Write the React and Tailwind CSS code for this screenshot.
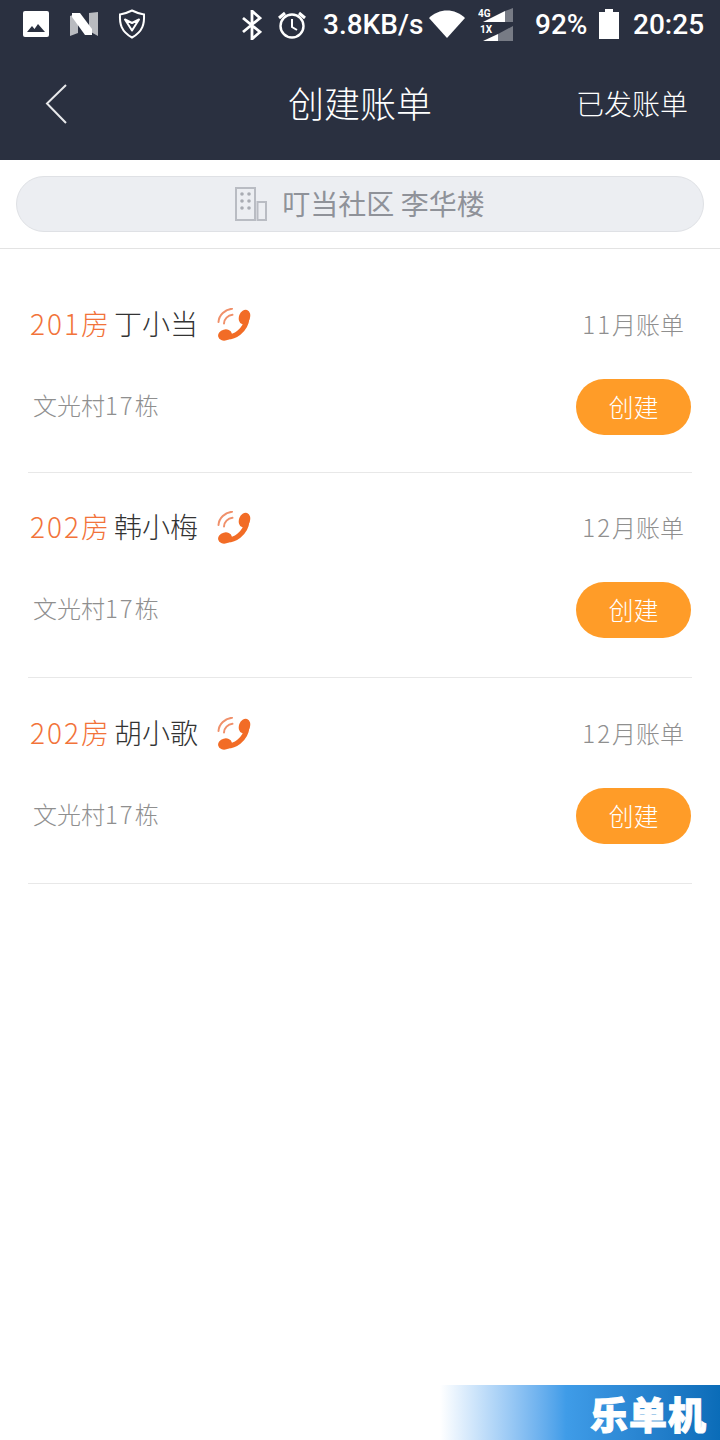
const bills = [
  { room: '201', name: '丁小当', month: '11', pt: 'pt-[58px]', h: 'h-[224px]' },
  { room: '202', name: '韩小梅', month: '12', pt: 'pt-[37px]', h: 'h-[205px]' },
  { room: '202', name: '胡小歌', month: '12', pt: 'pt-[38px]', h: 'h-[206px]' },
];

function PhoneIcon() {
  return (
    <svg width="34" height="34" viewBox="0 0 34 34" fill="none" className="shrink-0">
      <path d="M1.5 14C2 7 8 1.500 15 .8" stroke="#f0906a" strokeWidth="2" strokeLinecap="round" />
      <path d="M7 15.500C7 11 11 7.200 15.500 6.800" stroke="#f0906a" strokeWidth="2" strokeLinecap="round" />
      <path d="M7 28.500C17 31 29 22 30 10" stroke="#f26c26" strokeWidth="5" />
      <ellipse cx="8" cy="27" rx="7" ry="5.500" transform="rotate(-15 8 27)" fill="#f26c26" />
      <ellipse cx="27.500" cy="9" rx="5.500" ry="7.500" transform="rotate(20 27.500 9)" fill="#f26c26" />
    </svg>
  );
}

function StatusBar() {
  return (
    <div className="h-[50px] flex items-center text-white font-['Roboto',sans-serif] font-medium text-[28px] relative">
      <svg width="26" height="26" viewBox="0 0 26 26" className="ml-[23px] -mt-[2px]">
        <rect width="26" height="26" rx="2" fill="#fff" />
        <path d="M4 21l5-6 2.500 3 3.500-5 7 8z" fill="#2a3040" />
      </svg>
      <svg width="28" height="24" viewBox="0 0 28 24" className="ml-[21px] -mt-[2px]">
        <path d="M0 4l8-3v20l-8 3z" fill="#b9bbc0" />
        <path d="M19 1l9-1v24l-9-5z" fill="#b9bbc0" />
        <path d="M2 1h8l12 16v6h-7L2 5z" fill="#fff" />
      </svg>
      <svg width="28" height="30" viewBox="0 0 28 30" fill="none" className="ml-[20px] -mt-[2px]">
        <path d="M14 1.500C9 4 6 5 2 5.500c-.5 9 1 17 12 23 11-6 12.500-14 12-23-4-.5-7-1.500-12-4z" stroke="#fff" strokeWidth="2" />
        <path d="M7 10.500l7 3.500 7-3.500-7 11z" stroke="#fff" strokeWidth="2" strokeLinejoin="round" />
      </svg>
      <svg width="20" height="30" viewBox="0 0 20 30" fill="none" className="ml-[96px]">
        <path d="M1 8l17 14-8 7V1l8 7L1 22" stroke="#fff" strokeWidth="2.800" />
      </svg>
      <svg width="28" height="30" viewBox="0 0 28 30" fill="none" className="ml-[16px]">
        <circle cx="14" cy="16" r="11.500" stroke="#fff" strokeWidth="2.400" />
        <path d="M14 9v8l5 3" stroke="#fff" strokeWidth="2" />
        <path d="M1 8l6-5M27 8l-6-5" stroke="#fff" strokeWidth="3" />
      </svg>
      <span className="ml-[17px] w-[106px] whitespace-nowrap">3.8KB/s</span>
      <svg width="36" height="28" viewBox="0 0 36 28" className="-mt-[2px]">
        <path d="M0 8C10-2 26-2 36 8L18 28z" fill="#fff" />
      </svg>
      <svg width="36" height="34" viewBox="0 0 36 34" className="ml-[13px]">
        <path d="M5 14l22-11v11z" fill="#fff" />
        <path d="M27 3l8-3v14h-8z" fill="#777b85" />
        <path d="M5 33l15-7v7z" fill="#fff" />
        <path d="M20 26l15-8v15H20z" fill="#777b85" />
        <text x="0" y="9" fill="#fff" fontSize="10" fontFamily="Roboto" fontWeight="700">4G</text>
        <text x="2" y="25" fill="#fff" fontSize="10" fontFamily="Roboto" fontWeight="700">1X</text>
      </svg>
      <span className="ml-[21px] w-[64px] whitespace-nowrap">92%</span>
      <svg width="20" height="30" viewBox="0 0 20 30" className="-mt-[2px]">
        <path d="M6 0h8v3h6v27H0V3h6z" fill="#fff" />
      </svg>
      <span className="ml-[14px] whitespace-nowrap">20:25</span>
    </div>
  );
}

function BuildingIcon() {
  return (
    <svg width="32" height="34" viewBox="0 0 32 34" fill="none" className="shrink-0">
      <rect x="1" y="1" width="19" height="32" stroke="#b9bcc3" strokeWidth="2" />
      <rect x="22.500" y="15" width="8.500" height="18" stroke="#b9bcc3" strokeWidth="2" />
      {[7, 14, 21].map(y => (
        <g key={y} fill="#a9acb3">
          <circle cx="7" cy={y} r="1.800" />
          <circle cx="14" cy={y} r="1.800" />
        </g>
      ))}
    </svg>
  );
}

export default function App() {
  return (
    <div className="w-[720px] h-[1440px] bg-white overflow-hidden flex flex-col font-['Noto_Sans_CJK_SC',sans-serif]">
      <div className="h-[160px] bg-[#2a3040] shrink-0">
        <StatusBar />
        <div className="h-[110px] grid grid-cols-[1fr_auto_1fr] items-center">
          <svg width="24" height="42" viewBox="0 0 24 42" fill="none" className="ml-[45px] -translate-y-[1px]">
            <path d="M21 2L2 20.500 21 40" stroke="#e8e9eb" strokeWidth="2" />
          </svg>
          <span className="text-[36px] text-white font-light leading-none -translate-y-[3px]">创建账单</span>
          <span className="justify-self-end mr-[32px] text-[28px] text-white font-light leading-none -translate-y-[2px]">已发账单</span>
        </div>
      </div>

      <div className="h-[89px] shrink-0 pt-[16px] border-b border-[#e3e3e3]">
        <div className="mx-[16px] h-[56px] rounded-full bg-[#eceef2] border border-[#dfe1e5] flex items-center justify-center gap-[15px]">
          <BuildingIcon />
          <span className="text-[28px] text-[#8f9299] leading-none -translate-y-[1px]">叮当社区 李华楼</span>
        </div>
      </div>

      {bills.map(b => (
        <div key={b.name} className={`mx-[28px] shrink-0 border-b border-[#e8e8e8] ${b.pt} ${b.h}`}>
          <div className="h-[36px] flex items-center justify-between">
            <div className="flex items-center ml-[2px]">
              <span className="text-[28px] text-[#f2733a] font-light leading-none -translate-y-[2px]"><span className="tracking-[2px]">{b.room}</span>房</span>
              <span className="ml-[5px] text-[28px] text-[#333333] font-light leading-none -translate-y-[2px]">{b.name}</span>
              <span className="ml-[19px] flex"><PhoneIcon /></span>
            </div>
            <span className="mr-[8px] text-[24px] text-[#8f8f8f] font-light leading-none -translate-y-[1px]"><span className="tracking-[2px]">{b.month}</span>月账单</span>
          </div>
          <div className="mt-[36px] h-[56px] flex items-center justify-between">
            <span className="ml-[5px] text-[24px] text-[#8f8f8f] font-light leading-none -translate-y-[2px]">文光村<span className="tracking-[2px]">17</span>栋</span>
            <button className="w-[115px] h-[56px] mr-[1px] rounded-full bg-[#ff9c28] text-white text-[25px] font-light leading-none"><span className="block -translate-y-[1px]">创建</span></button>
          </div>
        </div>
      ))}

      <div className="flex-1 flex items-end justify-end">
        <div className="w-[280px] h-[55px] bg-linear-to-r from-white via-[#3f9ce8] via-45% to-[#0a6cb8] flex items-center justify-end pr-[13px]">
          <span className="text-[38px] font-black text-white leading-none tracking-[1px] [-webkit-text-stroke:1px_white]">乐单机</span>
        </div>
      </div>
    </div>
  );
}
